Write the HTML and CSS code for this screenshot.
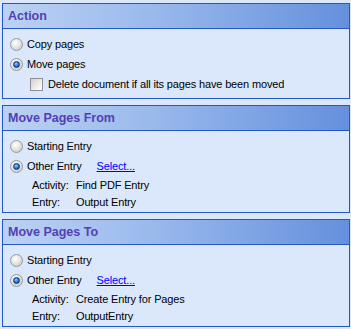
FILE: index.html
```html
<!DOCTYPE html>
<html lang="en">
<head>
    <meta charset="UTF-8">
    <title>Move Pages</title>
    <link rel="stylesheet" href="styles.css">
</head>
<body>
    <div class="painel">
        <div class="cabecalho">Action</div>
        <div class="corpo">
            <div class="linha"><span class="radio"></span>Copy pages</div>
            <div class="linha"><span class="radio marcado"></span>Move pages</div>
            <div class="linha recuo"><span class="caixa"></span>Delete document if all its pages have been moved</div>
        </div>
    </div>

    <div class="painel">
        <div class="cabecalho">Move Pages From</div>
        <div class="corpo">
            <div class="linha"><span class="radio"></span>Starting Entry</div>
            <div class="linha"><span class="radio marcado"></span>Other Entry<a class="link">Select...</a></div>
            <div class="detalhe"><span class="rotulo">Activity:</span>Find PDF Entry</div>
            <div class="detalhe"><span class="rotulo">Entry:</span>Output Entry</div>
        </div>
    </div>

    <div class="painel">
        <div class="cabecalho">Move Pages To</div>
        <div class="corpo">
            <div class="linha"><span class="radio"></span>Starting Entry</div>
            <div class="linha"><span class="radio marcado"></span>Other Entry<a class="link">Select...</a></div>
            <div class="detalhe"><span class="rotulo">Activity:</span>Create Entry for Pages</div>
            <div class="detalhe"><span class="rotulo">Entry:</span>OutputEntry</div>
        </div>
    </div>
</body>
</html>
```

FILE: styles.css
```css
*{
    font-family: "Liberation Sans", Arial, sans-serif;
    box-sizing: border-box;
}

body{
    margin: 0;
    padding: 3px 1px 0 2px;
    background-color: #dbe8fb;
    width: 351px;
    height: 329px;
    overflow: hidden;
}

.painel{
    border: 1px solid #2358c2;
    background-color: #dbe8fb;
    margin-bottom: 6px;
}

.cabecalho{
    height: 25px;
    border-bottom: 1px solid #2358c2;
    background: linear-gradient(to right, #bcd2f4, #98b8ec 45%, #6590dd);
    color: #5340b3;
    font-weight: bold;
    font-size: 12.5px;
    padding-left: 5px;
    display: flex;
    align-items: center;
}

.corpo{
    padding: 5px 0 4px 7px;
    font-size: 11px;
    letter-spacing: -0.15px;
    color: #000000;
}

.painel + .painel .corpo{
    padding-bottom: 2px;
}

.linha{
    height: 20px;
    display: flex;
    align-items: center;
}

.recuo{
    padding-left: 20px;
}

.radio{
    width: 13px;
    height: 13px;
    border-radius: 50%;
    border: 1px solid #9a9a9a;
    background: radial-gradient(circle at 40% 35%, #ffffff 0%, #e6e6e6 45%, #bdbdbd 100%);
    margin-right: 4px;
    display: flex;
    align-items: center;
    justify-content: center;
}

.marcado::after{
    content: "";
    width: 7px;
    height: 7px;
    border-radius: 50%;
    border: 1px solid #0c2f6e;
    background: radial-gradient(circle at 40% 35%, #9fd0ff 0%, #2b7ad6 50%, #0b3c8c 100%);
    box-sizing: border-box;
}

.caixa{
    width: 13px;
    height: 13px;
    border: 1px solid #8f8f8f;
    background: linear-gradient(135deg, #cfcfcf, #f4f4f4 70%, #ffffff);
    margin-right: 5px;
}

.link{
    color: #0000ff;
    text-decoration: underline;
    margin-left: 15px;
    cursor: pointer;
}

.detalhe{
    height: 17px;
    display: flex;
    align-items: center;
    padding-left: 22px;
}

.rotulo{
    width: 44px;
}
```
